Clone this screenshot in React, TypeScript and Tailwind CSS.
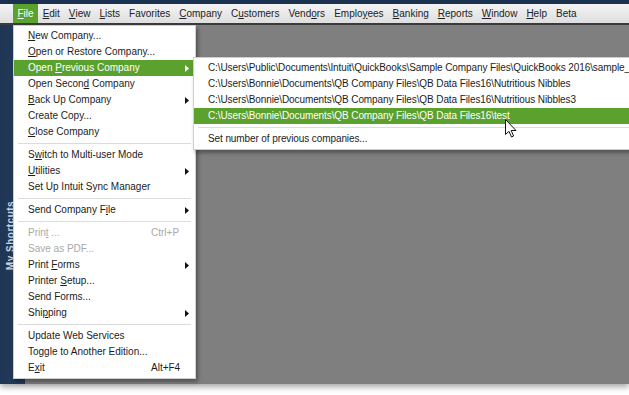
import React from 'react';

type Item =
  | { sep: true }
  | { label: string; u?: number; arrow?: boolean; key?: string; off?: boolean; hot?: boolean };

const fileItems: Item[] = [
  { label: 'New Company...', u: 0 },
  { label: 'Open or Restore Company...', u: 0 },
  { label: 'Open Previous Company', u: 5, arrow: true, hot: true },
  { label: 'Open Second Company', u: 10 },
  { label: 'Back Up Company', u: 0, arrow: true },
  { label: 'Create Copy...' },
  { label: 'Close Company', u: 0 },
  { sep: true },
  { label: 'Switch to Multi-user Mode', u: 1 },
  { label: 'Utilities', u: 0, arrow: true },
  { label: 'Set Up Intuit Sync Manager' },
  { sep: true },
  { label: 'Send Company File', u: 14, arrow: true },
  { sep: true },
  { label: 'Print ...', u: 4, key: 'Ctrl+P', off: true },
  { label: 'Save as PDF...', off: true },
  { label: 'Print Forms', u: 6, arrow: true },
  { label: 'Printer Setup...', u: 8 },
  { label: 'Send Forms...' },
  { label: 'Shipping', u: 3, arrow: true },
  { sep: true },
  { label: 'Update Web Services' },
  { label: 'Toggle to Another Edition...' },
  { label: 'Exit', u: 1, key: 'Alt+F4' },
];

const recent = [
  'C:\\Users\\Public\\Documents\\Intuit\\QuickBooks\\Sample Company Files\\QuickBooks 2016\\sample_',
  'C:\\Users\\Bonnie\\Documents\\QB Company Files\\QB Data Files16\\Nutritious Nibbles',
  'C:\\Users\\Bonnie\\Documents\\QB Company Files\\QB Data Files16\\Nutritious Nibbles3',
  'C:\\Users\\Bonnie\\Documents\\QB Company Files\\QB Data Files16\\test',
];

const menus: [string, number | undefined][] = [
  ['File', 0],
  ['Edit', 0],
  ['View', 0],
  ['Lists', 0],
  ['Favorites', undefined],
  ['Company', 0],
  ['Customers', 1],
  ['Vendors', 4],
  ['Employees', 5],
  ['Banking', 0],
  ['Reports', 0],
  ['Window', 0],
  ['Help', 0],
  ['Beta', undefined],
];

function Mn({ text, u }: { text: string; u?: number }) {
  if (u === undefined) return <>{text}</>;
  return (
    <>
      {text.slice(0, u)}
      <span className="underline underline-offset-[1px]">{text[u]}</span>
      {text.slice(u + 1)}
    </>
  );
}

function Arrow({ white }: { white?: boolean }) {
  return (
    <svg width="4" height="7" viewBox="0 0 4 7" className="absolute right-[6px] top-[5px]">
      <path d="M0 0 L4 3.5 L0 7 Z" fill={white ? '#ffffff' : '#111111'} />
    </svg>
  );
}

export default function App() {
  return (
    <div className="relative w-[629px] h-[395px] overflow-hidden bg-white text-[10px] text-[#1c1c1c]" style={{ fontFamily: '"Liberation Sans", Arial, sans-serif' }}>
      <div className="flex flex-col h-[384px] shadow-[0_3px_6px_rgba(0,0,0,0.35)]">
        <div className="h-[4px] bg-[#1b3150]" />
        <div className="h-[19px] flex items-stretch pl-[13px] bg-gradient-to-b from-[#f4f4f4] to-[#dedede] text-[#222]">
          {menus.map(([m, u]) => (
            <div key={m} className={`flex items-center px-[4.5px] ${m === 'File' ? 'bg-[#5ba12e] text-white' : ''}`}>
              <Mn text={m} u={u} />
            </div>
          ))}
        </div>
        <div className="h-[2px] bg-[#3b3b3b]" />
        <div className="flex flex-1">
          <div className="relative w-[25px] bg-gradient-to-r from-[#1f3554] to-[#243c5c]">
            <div className="absolute left-[-40px] top-[203px] w-[100px] -rotate-90 text-[10px] font-bold tracking-[0.5px] text-[#c9d3df] whitespace-nowrap text-center">
              My Shortcuts
            </div>
          </div>
          <div className="flex-1 bg-[#7f7f7f]" />
        </div>
      </div>

      {/* File menu */}
      <div className="absolute left-[13px] top-[25px] w-[183px] bg-white border border-[#cfcfcf] pt-[2px] pb-[2px] shadow-[2px_3px_4px_rgba(0,0,0,0.35)]">
        {fileItems.map((it, i) =>
          'sep' in it ? (
            <div key={i} className="h-[7px] flex items-center pl-[4px] pr-[4px]">
              <div className="h-px w-full bg-[#dcdcdc]" />
            </div>
          ) : (
            <div
              key={i}
              className={`relative h-[16px] leading-[16px] pl-[14px] whitespace-nowrap ${it.hot ? 'bg-[#5ba12e] text-white' : ''} ${it.off ? 'text-[#a9a9a9]' : ''}`}
            >
              <Mn text={it.label} u={it.u} />
              {it.key && <span className="absolute left-[137px]">{it.key}</span>}
              {it.arrow && <Arrow white={it.hot} />}
            </div>
          )
        )}
      </div>

      {/* Open Previous Company submenu */}
      <div className="absolute left-[193px] top-[57px] w-[460px] bg-white border border-[#cfcfcf] pt-[2px] pb-[2px] shadow-[2px_3px_4px_rgba(0,0,0,0.35)] tracking-[-0.1px]">
        {recent.map((r, i) => (
          <div key={i} className={`h-[16px] leading-[16px] pl-[14px] whitespace-nowrap ${i === 3 ? 'bg-[#5ba12e] text-white' : ''}`}>
            {r}
          </div>
        ))}
        <div className="h-[7px] flex items-center px-[4px]">
          <div className="h-px w-full bg-[#dcdcdc]" />
        </div>
        <div className="h-[16px] leading-[16px] pl-[14px]">Set number of previous companies...</div>
      </div>

      {/* mouse pointer */}
      <svg className="absolute left-[505px] top-[119px]" width="12" height="19" viewBox="0 0 12 19">
        <path d="M0.5 0.5 L0.5 15.5 L4 12.3 L6.5 18 L8.6 17 L6.2 11.5 L11 11.5 Z" fill="#ffffff" stroke="#111111" strokeWidth="1" strokeLinejoin="round" />
      </svg>
    </div>
  );
}
